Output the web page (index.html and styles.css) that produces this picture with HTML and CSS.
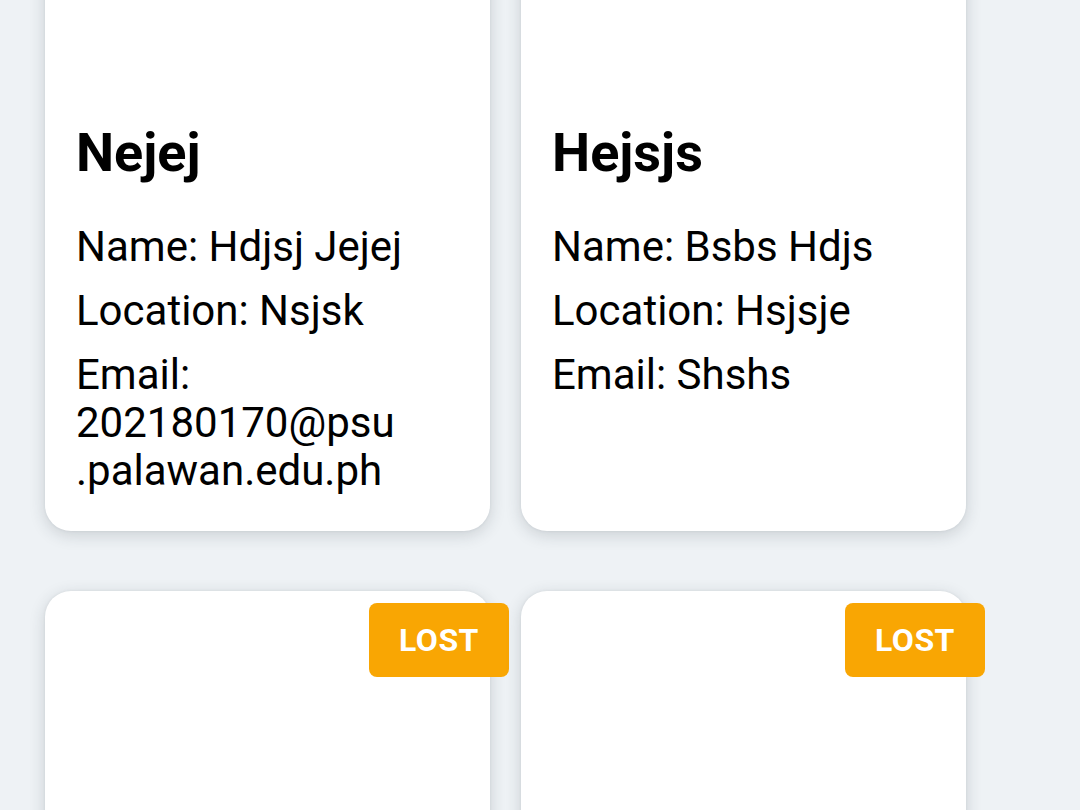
FILE: index.html
```html
<!DOCTYPE html>
<html lang="en">
<head>
<meta charset="utf-8">
<title>Items</title>
<link rel="stylesheet" href="styles.css">
</head>
<body>
<main class="feed">
  <div class="grid">
    <article class="card">
      <div class="media"></div>
      <h2 class="title">Nejej</h2>
      <p class="line">Name: Hdjsj Jejej</p>
      <p class="line">Location: Nsjsk</p>
      <p class="line">Email: 202180170@psu<wbr>.palawan.edu.ph</p>
    </article>
    <article class="card">
      <div class="media"></div>
      <h2 class="title">Hejsjs</h2>
      <p class="line">Name: Bsbs Hdjs</p>
      <p class="line">Location: Hsjsje</p>
      <p class="line">Email: Shshs</p>
    </article>
    <article class="card">
      <span class="badge">LOST</span>
      <div class="media tall"></div>
    </article>
    <article class="card">
      <span class="badge">LOST</span>
      <div class="media tall"></div>
    </article>
  </div>
</main>
</body>
</html>
```

FILE: styles.css
```css
html, body {
  margin: 0;
  padding: 0;
  background: #eef2f5;
  font-family: Roboto, "Noto Sans", "Liberation Sans", sans-serif;
  color: #000;
  overflow: hidden;
}

.feed {
  width: 1080px;
  height: 810px;
  overflow: hidden;
}

.grid {
  display: grid;
  grid-template-columns: 445px 445px;
  column-gap: 31px;
  row-gap: 60px;
  padding-left: 45px;
  margin-top: -60px;
}

.card {
  position: relative;
  background: #fff;
  border-radius: 26px;
  padding: 0 31px 36px;
  box-shadow: 0 4px 16px rgba(40, 50, 60, 0.18), 0 0 3px rgba(40, 50, 60, 0.08);
}

.media {
  height: 183px;
}

.media.tall {
  height: 400px;
}

.title {
  margin: 0 0 40px;
  font-size: 54px;
  line-height: 60px;
  font-weight: 700;
}

.line {
  margin: 0 0 16px;
  font-size: 42px;
  line-height: 48px;
  overflow-wrap: break-word;
}

.line:last-child {
  margin-bottom: 0;
}

.badge {
  position: absolute;
  top: 12px;
  right: -19px;
  width: 140px;
  height: 74px;
  display: flex;
  align-items: center;
  justify-content: center;
  background: #f9a603;
  color: #fff;
  font-weight: 700;
  font-size: 32px;
  border-radius: 8px;
  letter-spacing: 0.5px;
}
```
